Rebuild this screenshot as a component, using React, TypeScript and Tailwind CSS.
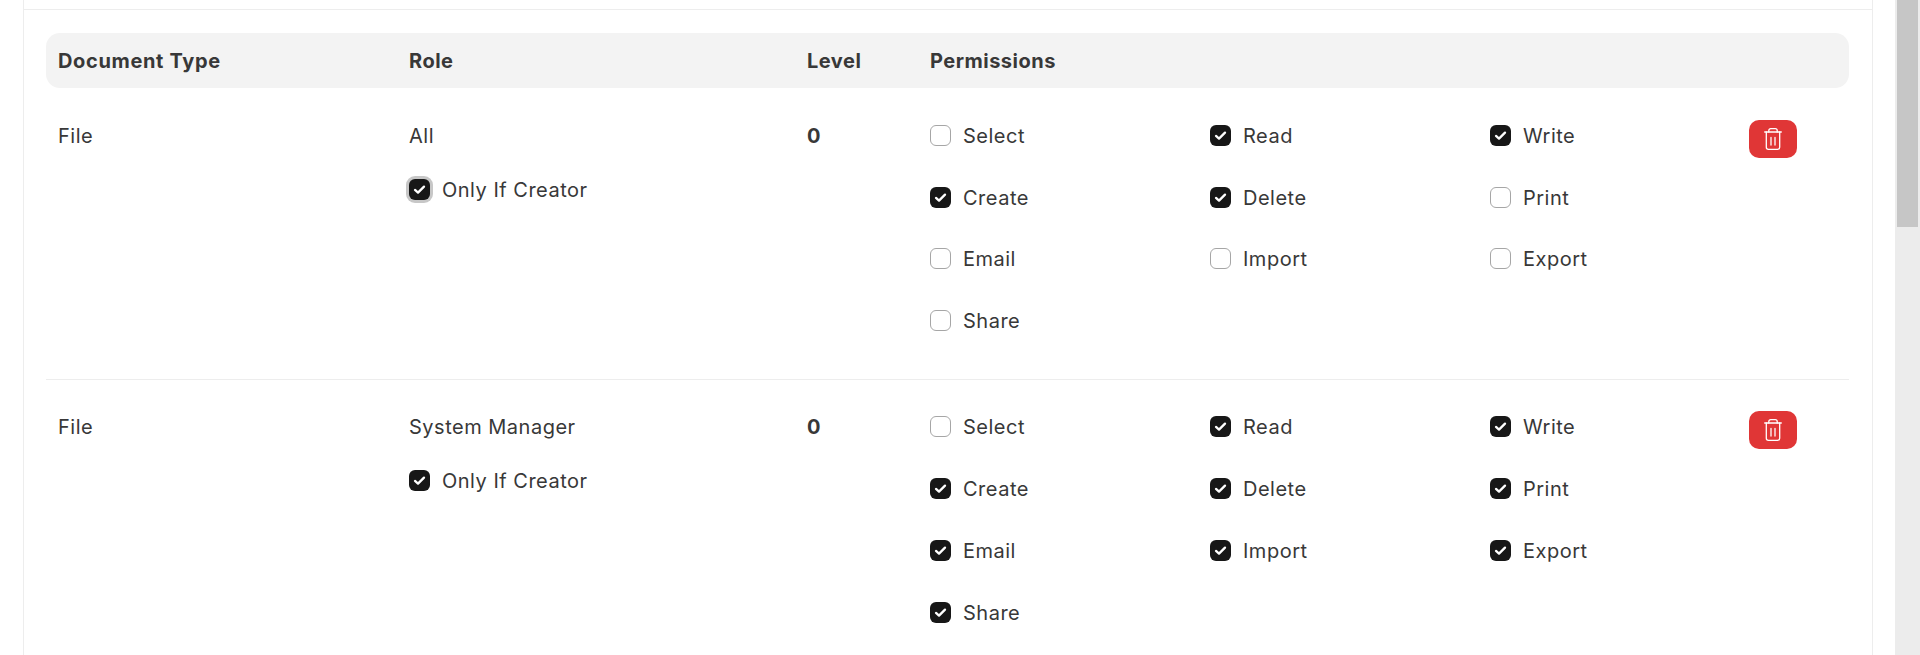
const perms = ["Select", "Read", "Write", "Create", "Delete", "Print", "Email", "Import", "Export", "Share"];

function Check({ on, focus, label }: { on: boolean; focus?: boolean; label: string }) {
  return (
    <label className="flex items-center h-[21px] gap-[12px] text-[#383838]">
      <span
        className={
          "flex items-center justify-center w-[21px] h-[21px] rounded-[6px] shrink-0 " +
          (on ? "bg-[#171717]" : "bg-white border border-[#a6a6a6]") +
          (focus ? " ring-[3px] ring-[#c7c7c7]" : "")
        }
      >
        {on && (
          <svg width="13" height="13" viewBox="0 0 13 13" fill="none">
            <path d="M2 6.9 5 9.6 11 3.6" stroke="#fff" strokeWidth="2.3" strokeLinecap="round" strokeLinejoin="round" />
          </svg>
        )}
      </span>
      <span>{label}</span>
    </label>
  );
}

function Trash() {
  return (
    <svg width="18" height="22" viewBox="0 0 18 22" fill="none" stroke="#fff" strokeWidth="1.3" strokeLinecap="round" strokeLinejoin="round">
      <path d="M0.7 4h16.6" />
      <path d="M4.8 4V2.6C4.8 1.4 5.6 0.7 6.7 0.7h4.6c1.1 0 1.9.7 1.9 1.9V4" />
      <path d="M2.3 4v15.2c0 1.2.9 2.1 2.1 2.1h9.2c1.2 0 2.1-.9 2.1-2.1V4" />
      <path d="M7 9.5v7.5M11 9.5v7.5" />
    </svg>
  );
}

function Row({ role, checked, focus, last }: { role: string; checked: string[]; focus?: boolean; last?: boolean }) {
  return (
    <div className={"flex px-[12px] " + (last ? "pt-[36px] h-[290px]" : "pt-[37px] h-[292px] border-b border-[#ededed]")}>
      <div className="w-[351px] h-[21px] flex items-center">File</div>
      <div className="w-[398px] flex flex-col">
        <div className="h-[21px] flex items-center">{role}</div>
        <div className="mt-[33px]">
          <Check on focus={focus} label="Only If Creator" />
        </div>
      </div>
      <div className="w-[123px] h-[21px] flex items-center font-bold text-[#383838]">0</div>
      <div
        className={
          "w-[840px] grid grid-cols-3 content-start " +
          (last ? "grid-rows-[62px_62px_62px_21px]" : "grid-rows-[62px_61px_62px_21px]")
        }
      >
        {perms.map((p) => (
          <Check key={p} on={checked.includes(p)} label={p} />
        ))}
      </div>
      <button className="ml-[-21px] mt-[-5px] w-[48px] h-[38px] rounded-[10px] bg-[#e03636] flex items-center justify-center">
        <Trash />
      </button>
    </div>
  );
}

export default function App() {
  return (
    <div className="h-[655px] overflow-hidden flex bg-white text-[20px] tracking-[0.5px] text-[#383838] font-['Inter',sans-serif]">
      <div className="flex-1 min-w-0 pl-[23px] pr-[22px]">
        <div className="h-[655px] border-x border-[#ededed]">
          <div className="h-[10px] border-b border-[#ededed]" />
          <div className="pt-[23px] pl-[22px] pr-[23px]">
            <div className="flex h-[55px] items-center rounded-[14px] bg-[#f3f3f3] px-[12px] font-bold">
              <div className="w-[351px] tracking-[0.65px]">Document Type</div>
              <div className="w-[398px]">Role</div>
              <div className="w-[123px]">Level</div>
              <div>Permissions</div>
            </div>
            <Row role="All" focus checked={["Read", "Write", "Create", "Delete"]} />
            <Row role="System Manager" last checked={["Read", "Write", "Create", "Delete", "Print", "Email", "Import", "Export", "Share"]} />
          </div>
        </div>
      </div>
      <div className="w-[25px] bg-[#ececec] px-[2px]">
        <div className="h-[227px] bg-[#c6c6c6]" />
      </div>
    </div>
  );
}
